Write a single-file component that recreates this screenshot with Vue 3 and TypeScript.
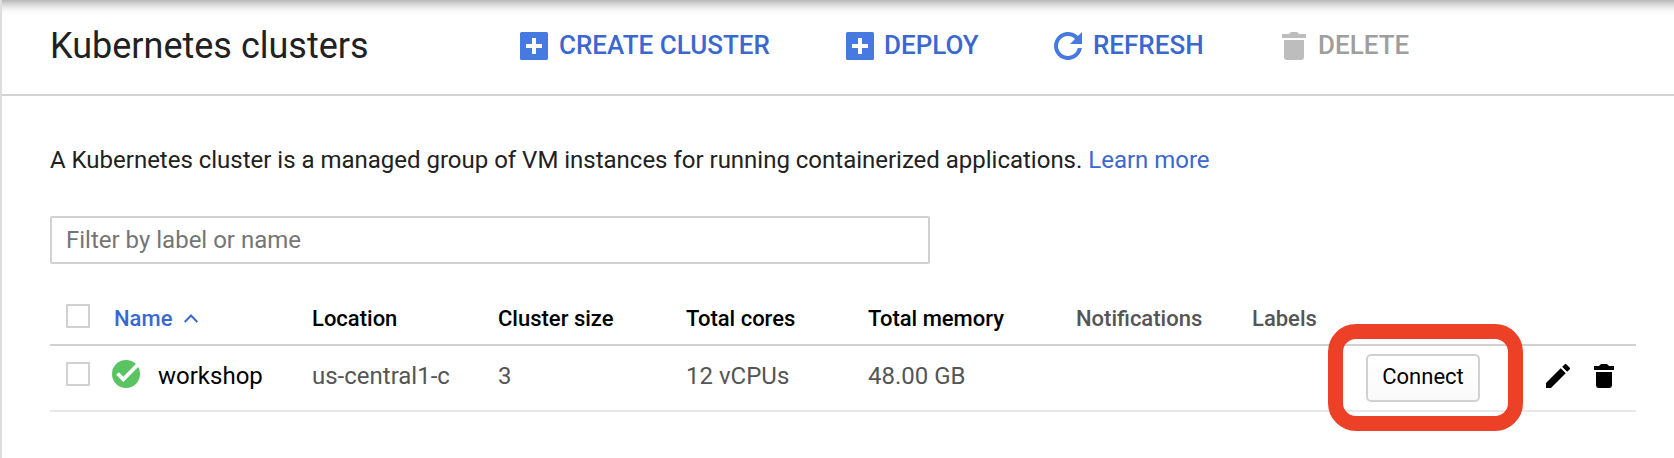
<script setup lang="ts">
interface Column {
  label: string
  tone: 'dark' | 'muted'
}

const columns: Column[] = [
  { label: 'Location', tone: 'dark' },
  { label: 'Cluster size', tone: 'dark' },
  { label: 'Total cores', tone: 'dark' },
  { label: 'Total memory', tone: 'dark' },
  { label: 'Notifications', tone: 'muted' },
  { label: 'Labels', tone: 'muted' },
]

const cluster = {
  name: 'workshop',
  values: ['us-central1-c', '3', '12 vCPUs', '48.00 GB', '', ''],
}
</script>

<template>
  <div class="page">
    <header class="toolbar">
      <h1 class="title">Kubernetes clusters</h1>
      <button class="action create">
        <svg width="28" height="28" viewBox="0 0 28 28">
          <path fill-rule="evenodd" d="M1.5 0h25A1.5 1.5 0 0 1 28 1.5v25a1.5 1.5 0 0 1-1.5 1.5h-25A1.5 1.5 0 0 1 0 26.5v-25A1.5 1.5 0 0 1 1.5 0zM12 6v6H6v4h6v6h4v-6h6v-4h-6V6z" />
        </svg>
        <span>CREATE CLUSTER</span>
      </button>
      <button class="action deploy">
        <svg width="28" height="28" viewBox="0 0 28 28">
          <path fill-rule="evenodd" d="M1.5 0h25A1.5 1.5 0 0 1 28 1.5v25a1.5 1.5 0 0 1-1.5 1.5h-25A1.5 1.5 0 0 1 0 26.5v-25A1.5 1.5 0 0 1 1.5 0zM12 6v6H6v4h6v6h4v-6h6v-4h-6V6z" />
        </svg>
        <span>DEPLOY</span>
      </button>
      <button class="action refresh">
        <svg width="28" height="28" viewBox="0 0 28 28">
          <path d="M23.9 4.1A14 14 0 1 0 27.86 16H23.8A10 10 0 1 1 21 6.9L16 12H28V0z" />
        </svg>
        <span>REFRESH</span>
      </button>
      <button class="action delete" disabled>
        <svg width="24" height="28" viewBox="0 0 24 28">
          <path d="M0 2h7l2-2h6l2 2h7v4H0zM2 8h20v17a3 3 0 0 1-3 3H5a3 3 0 0 1-3-3z" />
        </svg>
        <span>DELETE</span>
      </button>
    </header>

    <main class="content">
      <p class="intro">
        A Kubernetes cluster is a managed group of VM instances for running containerized applications.
        <a class="link">Learn more</a>
      </p>
      <input class="filter" type="text" placeholder="Filter by label or name" />

      <div class="table">
        <div class="row head">
          <span class="box"></span>
          <span class="name-head">
            <span>Name</span>
            <svg width="14" height="9" viewBox="0 0 14 9"><path d="M.7 8L7 1.5 13.3 8" fill="none" stroke="currentColor" stroke-width="2" /></svg>
          </span>
          <span v-for="c in columns" :key="c.label" :class="c.tone">{{ c.label }}</span>
        </div>
        <div class="row body">
          <span class="box"></span>
          <span class="name-cell">
            <svg class="status" width="28" height="28" viewBox="0 0 28 28">
              <circle cx="14" cy="14" r="14" fill="#5bc462" />
              <path d="M5.5 13.5L11.3 19.3 26 4.5" fill="none" stroke="#fff" stroke-width="3.8" />
            </svg>
            <span>{{ cluster.name }}</span>
          </span>
          <span v-for="(v, i) in cluster.values" :key="i" class="value">{{ v }}</span>
          <span class="connect-cell">
            <button class="connect">Connect</button>
            <span class="highlight"></span>
          </span>
          <span class="icons">
            <svg width="24" height="24" viewBox="3 3 18 18"><path d="M3 17.25V21h3.75L17.81 9.94l-3.75-3.75L3 17.25zM20.71 7.04a1 1 0 0 0 0-1.41l-2.34-2.34a1 1 0 0 0-1.41 0l-1.83 1.83 3.75 3.75 1.83-1.83z" /></svg>
            <svg width="20" height="24" viewBox="0 0 20 24"><path d="M0 2h5l2-2h6l2 2h5v4H0zM2 8h16v13a3 3 0 0 1-3 3H5a3 3 0 0 1-3-3z" /></svg>
          </span>
        </div>
      </div>
    </main>
  </div>
</template>

<style>
body {
  background: #fff;
}
</style>

<style scoped>
.page {
  box-sizing: border-box;
  height: 458px;
  overflow: hidden;
  border-left: 2px solid #dedede;
  font-family: Roboto, "Liberation Sans", sans-serif;
  color: #212121;
}
.toolbar {
  box-sizing: border-box;
  height: 96px;
  display: flex;
  align-items: center;
  padding: 4px 0 6px 48px;
  border-bottom: 2px solid #d3d3d3;
  background: linear-gradient(#b8b8b8 0, #cecece 3px, #e8e8e8 7px, #f9f9f9 11px, #fff 16px);
}
.title {
  margin: 0;
  width: 470px;
  font-size: 36px;
  font-weight: 400;
  line-height: 48px;
  white-space: nowrap;
}
.action {
  display: flex;
  align-items: center;
  box-sizing: border-box;
  height: 28px;
  padding: 0;
  border: 0;
  background: none;
  font: 500 26px/28px Roboto, "Liberation Sans", sans-serif;
  color: #3b68d0;
  white-space: nowrap;
}
.action span {
  margin-top: -2px;
}
.action svg {
  flex: none;
  fill: #467ae1;
  margin-right: 10px;
}
.create svg,
.refresh svg {
  margin-right: 11px;
}
.create { width: 326px; }
.deploy { width: 208px; }
.refresh { width: 228px; }
.action.delete { color: #9e9e9e; }
.action.delete svg {
  fill: #bdbdbd;
  margin-right: 12px;
}
.content {
  padding: 0 38px 0 48px;
}
.intro {
  margin: 0;
  padding-top: 48px;
  height: 72px;
  font-size: 24px;
  line-height: 32px;
  letter-spacing: -0.01px;
  white-space: nowrap;
}
.link { color: #3b68d0; }
.filter {
  display: block;
  box-sizing: border-box;
  width: 880px;
  height: 48px;
  padding: 0 14px;
  border: 2px solid #d1d1d1;
  border-radius: 2px;
  background: #fff;
  font: 400 24px/44px Roboto, "Liberation Sans", sans-serif;
}
.filter::placeholder {
  color: #757575;
  opacity: 1;
}
.table { margin-top: 26px; }
.row {
  box-sizing: border-box;
  display: grid;
  grid-template-columns: 48px 198px 186px 188px 182px 208px 176px 114px 180px 90px;
  padding-left: 16px;
  align-items: center;
  white-space: nowrap;
}
.head {
  height: 56px;
  padding-top: 4px;
  border-bottom: 2px solid #d1d1d1;
  font-size: 22px;
  font-weight: 500;
  line-height: 28px;
}
.body {
  height: 66px;
  padding-bottom: 4px;
  border-bottom: 2px solid #e8e8e8;
  font-size: 24px;
  line-height: 32px;
}
.box {
  box-sizing: border-box;
  width: 24px;
  height: 24px;
  border: 2px solid #d1d1d1;
  background: #fff;
}
.head .box { margin-top: -6px; }
.body .box { margin-top: -4px; }
.name-head {
  display: flex;
  align-items: center;
  gap: 12px;
  color: #3b68d0;
}
.name-head svg { margin-top: -2px; }
.dark { color: #000; }
.muted { color: #555; }
.name-cell {
  display: flex;
  align-items: center;
  color: #000;
}
.status {
  margin: -4px 18px 0 -2px;
}
.value { color: #555; }
.connect-cell {
  position: relative;
  width: 114px;
  height: 48px;
  margin-top: 4px;
}
.connect {
  display: block;
  box-sizing: border-box;
  width: 114px;
  height: 48px;
  padding: 0 0 2px;
  border: 2px solid #d1d1d1;
  border-radius: 5px;
  background: linear-gradient(#fff, #f9f9f9);
  font: 400 22px/40px Roboto, "Liberation Sans", sans-serif;
  color: #000;
}
.highlight {
  position: absolute;
  box-sizing: border-box;
  left: -38px;
  top: -30px;
  width: 195px;
  height: 107px;
  border: 15px solid #ed4127;
  border-radius: 28px;
}
.icons {
  display: flex;
  gap: 24px;
}
</style>
